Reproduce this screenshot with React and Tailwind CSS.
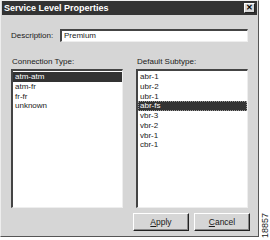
import React from 'react';

const connectionTypes = ['atm-atm', 'atm-fr', 'fr-fr', 'unknown'];
const subtypes = ['abr-1', 'ubr-2', 'ubr-1', 'abr-fs', 'vbr-3', 'vbr-2', 'vbr-1', 'cbr-1'];

const ListBox = ({ items, selected, focus }) => (
  <div className="h-[139px] bg-white border-t-2 border-l-2 border-b border-r border-t-[#444] border-l-[#444] border-b-[#eee] border-r-[#eee] pt-[1px] overflow-hidden">
    {items.map((item) => (
      <div
        key={item}
        className={
          'h-[9.75px] leading-[9.75px] px-[2px] ' +
          (item === selected
            ? 'bg-[#333] text-white ' + (focus ? 'outline-1 outline-dotted outline-[#999] -outline-offset-1' : '')
            : 'text-[#1a1a1a]')
        }
      >
        {item}
      </div>
    ))}
  </div>
);

const Button = ({ label, accel }) => (
  <button className="w-[56px] h-[18px] bg-[#d6d6d6] border border-t-white border-l-white border-b-[#222] border-r-[#222] shadow-[inset_-1px_-1px_0_#888] text-[8.5px] text-[#1a1a1a] leading-none">
    <span className="underline">{accel}</span>
    {label.slice(1)}
  </button>
);

export default function App() {
  return (
    <div className="w-[270px] h-[240px] bg-white flex items-start font-['Liberation_Sans',Arial,sans-serif]">
      {/* dialog window */}
      <div className="w-[261px] h-[237px] bg-[#d6d6d6] border border-t-[#eee] border-l-[#eee] border-b-[#555] border-r-[#555] flex flex-col">
        {/* title bar */}
        <div className="h-[14px] mx-[1px] bg-[#333] flex items-center justify-between pl-[2px] pr-[2px]">
          <span className="text-white font-bold text-[9px] leading-none">Service Level Properties</span>
          <span className="w-[11px] h-[10px] bg-[#d6d6d6] border border-t-white border-l-white border-b-[#222] border-r-[#222] flex items-center justify-center text-[8px] font-bold leading-none text-black">
            ✕
          </span>
        </div>

        <div className="flex flex-col px-[10px] text-[8px] text-[#1a1a1a]">
          {/* description */}
          <div className="flex items-center mt-[14px]">
            <span className="w-[49px]">Description:</span>
            <div className="w-[188px] h-[13px] bg-white border-t-2 border-l-2 border-b border-r border-t-[#444] border-l-[#444] border-b-[#eee] border-r-[#eee] flex items-center pl-[2px]">
              Premium
            </div>
          </div>

          {/* lists */}
          <div className="grid grid-cols-2 gap-[13px] mt-[14px]">
            <div className="flex flex-col">
              <span className="h-[13px] pl-[1px]">Connection Type:</span>
              <ListBox items={connectionTypes} selected="atm-atm" />
            </div>
            <div className="flex flex-col">
              <span className="h-[13px] pl-[1px]">Default Subtype:</span>
              <ListBox items={subtypes} selected="abr-fs" focus />
            </div>
          </div>

          {/* buttons */}
          <div className="flex justify-end gap-[5px] mt-[5px] -mr-[2px]">
            <Button label="Apply" accel="A" />
            <Button label="Cancel" accel="C" />
          </div>
        </div>
      </div>

      {/* figure number */}
      <div className="self-end mb-[2px] ml-[2px] text-[9px] leading-none text-[#222] [writing-mode:vertical-rl] rotate-180">
        18857
      </div>
    </div>
  );
}
